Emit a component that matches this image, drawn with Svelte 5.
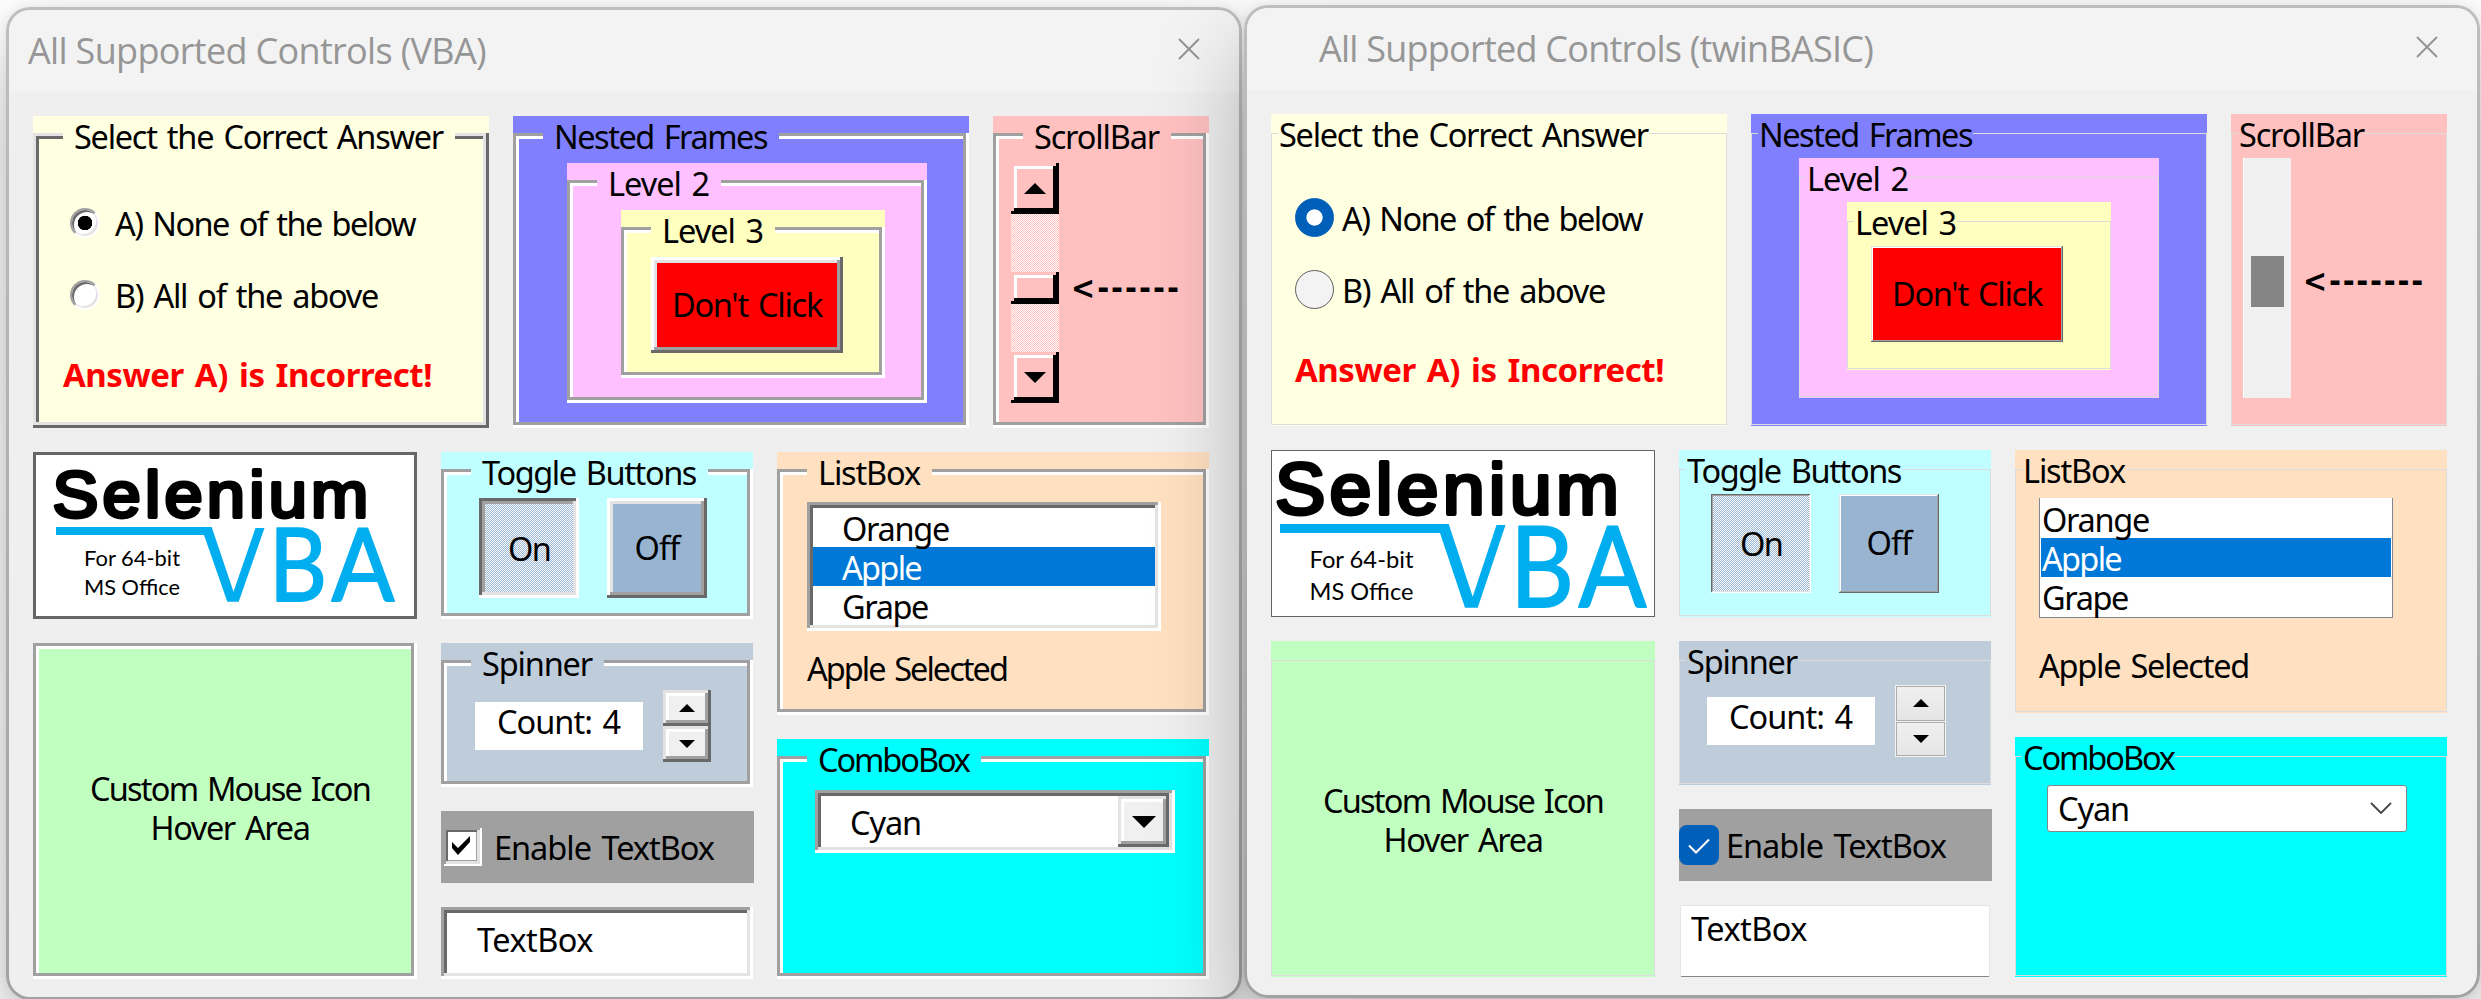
<script>
  // Spreads the letters of a label over the width it is laid out for.
  function fit(node, width) {
    const natural = node.getBoundingClientRect().width;
    const count = [...node.textContent].length;
    node.style.letterSpacing = `${(width - natural) / count}px`;
  }

  const forms = [
    {
      kind: 'vba',
      title: 'All Supported Controls (VBA)',
      titleWidth: 458,
      selectedWidth: 200,
      arrow: '<------',
      arrowWidth: 110,
      logo: {
        name: [19.500, 65, 65, 320],
        line: 'M23 75H178.700L200.500 139.700L222.500 76H231.500L205.700 149.700H194.300L171 83H23Z',
        ba: [[236, 149, 101, 58], [298.500, 149, 101, 63]],
        small: [[51, 114, 21.500, 96], [51, 143, 21.500, 96]]
      }
    },
    {
      kind: 'tb',
      title: 'All Supported Controls (twinBASIC)',
      titleWidth: 554,
      selectedWidth: 210,
      arrow: '<-------',
      arrowWidth: 122,
      logo: {
        name: [4, 63.500, 73, 348],
        line: 'M9 74H177.700L201.700 146.700L225.500 75H234.500L206.700 157.700H194L169 83H9Z',
        ba: [[239, 157, 113, 64], [307.500, 157, 113, 68]],
        small: [[38.500, 118, 23.500, 104], [38.500, 150, 23.500, 104]]
      }
    }
  ];

  const fruits = [
    ['Orange', 107],
    ['Apple', 79],
    ['Grape', 86]
  ];
  let picked = $state('Apple');
</script>

{#snippet t(text, width, cls = '')}
  <span class="t {cls}" use:fit={width}>{text}</span>
{/snippet}

{#snippet legend(text, width)}
  <div class="legend">{@render t(text, width)}</div>
{/snippet}

{#snippet tri(dir, w, h)}
  <svg class="tri" width={w} height={h} viewBox="0 0 10 10" preserveAspectRatio="none">
    <path d={dir === 'up' ? 'M5 0L10 10H0Z' : 'M0 0H10L5 10Z'} />
  </svg>
{/snippet}

<div class="desk">
  {#each forms as f}
    <section class="window {f.kind}">
      <div class="pane">
        <header>
          <h1 use:fit={f.titleWidth}>{f.title}</h1>
          <svg class="close" width="22" height="22" viewBox="0 0 22 22"><path d="M1 1L21 21M21 1L1 21" /></svg>
        </header>
        <main>
          <div class="row top">
            <div class="frame answer">
              <div class="edge">
                {@render legend('Select the Correct Answer', 369)}
                <div class="option first">
                  <i class="radio on"></i>{@render t('A) None of the below', 300)}
                </div>
                <div class="option">
                  <i class="radio"></i>{@render t('B) All of the above', 263)}
                </div>
                {@render t('Answer A) is Incorrect!', 369, 'wrong')}
              </div>
            </div>

            <div class="frame nested">
              <div class="edge">
                {@render legend('Nested Frames', 213)}
                <div class="frame level2">
                  <div class="edge">
                    {@render legend('Level 2', 101)}
                    <div class="frame level3">
                      <div class="edge">
                        {@render legend('Level 3', 101)}
                        <div class="push">{@render t("Don't Click", 150)}</div>
                      </div>
                    </div>
                  </div>
                </div>
              </div>
            </div>

            <div class="frame scrolling">
              <div class="edge">
                {@render legend('ScrollBar', 125)}
                <div class="scrollrow">
                  <div class="bar">
                    {#if f.kind === 'vba'}
                      <div class="cap">{@render tri('up', 22, 11)}</div>
                      <div class="thumb"></div>
                      <div class="cap">{@render tri('down', 22, 11)}</div>
                    {:else}
                      <div class="thumb"></div>
                    {/if}
                  </div>
                  {@render t(f.arrow, f.arrowWidth, 'pointer')}
                </div>
              </div>
            </div>
          </div>

          <div class="row">
            <div class="col c1">
              <div class="logo">
                <svg width="384" height="167" viewBox="0 0 384 167">
                  <text class="name" x={f.logo.name[0]} y={f.logo.name[1]} font-size={f.logo.name[2]} textLength={f.logo.name[3]} lengthAdjust="spacingAndGlyphs">Selenium</text>
                  <path class="blue" d={f.logo.line} />
                  {#each ['B', 'A'] as ch, i}
                    <text class="blue big" x={f.logo.ba[i][0]} y={f.logo.ba[i][1]} font-size={f.logo.ba[i][2]} textLength={f.logo.ba[i][3]} lengthAdjust="spacingAndGlyphs">{ch}</text>
                  {/each}
                  {#each ['For 64-bit', 'MS Office'] as line, i}
                    <text class="small" x={f.logo.small[i][0]} y={f.logo.small[i][1]} font-size={f.logo.small[i][2]} textLength={f.logo.small[i][3]} lengthAdjust="spacingAndGlyphs">{line}</text>
                  {/each}
                </svg>
              </div>
              <div class="frame hover">
                <div class="edge">
                  {@render t('Custom Mouse Icon', 280)}
                  {@render t('Hover Area', 159)}
                </div>
              </div>
            </div>

            <div class="col c2">
              <div class="frame toggles">
                <div class="edge">
                  {@render legend('Toggle Buttons', 214)}
                  <div class="pair">
                    <div class="toggle on">{@render t('On', 42)}</div>
                    <div class="toggle off">{@render t('Off', 45)}</div>
                  </div>
                </div>
              </div>
              <div class="frame spinner">
                <div class="edge">
                  {@render legend('Spinner', 110)}
                  <div class="spinrow">
                    <div class="count">{@render t('Count: 4', 123)}</div>
                    <div class="spin">
                      <div class="step">{@render tri('up', 16, 8)}</div>
                      <div class="step">{@render tri('down', 16, 8)}</div>
                    </div>
                  </div>
                </div>
              </div>
              <div class="enable">
                <div class="check">
                  {#if f.kind === 'vba'}
                    <svg width="18" height="19" viewBox="0 0 18 19"><path d="M0 6L6 12L18 0V6L6 19L0 12Z" /></svg>
                  {:else}
                    <svg width="22" height="16" viewBox="0 0 22 16"><path class="tick" d="M1 7.500L8 14.500L21 1.500" /></svg>
                  {/if}
                </div>
                {@render t('Enable TextBox', 220)}
              </div>
              <div class="textbox">{@render t('TextBox', 116)}</div>
            </div>

            <div class="col c3">
              <div class="frame listing">
                <div class="edge">
                  {@render legend('ListBox', 102)}
                  <div class="list">
                    {#each fruits as [name, width]}
                      <div class="item" class:picked={picked === name}>{@render t(name, width)}</div>
                    {/each}
                  </div>
                  {@render t(`${picked} Selected`, f.selectedWidth, 'result')}
                </div>
              </div>
              <div class="frame combos">
                <div class="edge">
                  {@render legend('ComboBox', 151)}
                  <div class="combo">
                    {@render t('Cyan', 71)}
                    {#if f.kind === 'vba'}
                      <div class="drop">{@render tri('down', 24, 12)}</div>
                    {:else}
                      <svg class="chev" width="22" height="12" viewBox="0 0 22 12"><path d="M1 1L11 11L21 1" /></svg>
                    {/if}
                  </div>
                </div>
              </div>
            </div>
          </div>
        </main>
      </div>
    </section>
  {/each}
</div>

<style>
  :global(body) { margin: 0; background: #fff; overflow: hidden; }
  .desk {
    display: flex; align-items: flex-start; gap: 2px; box-sizing: border-box;
    width: 2481px; height: 999px; padding: 5px 0 0 6px; overflow: hidden;
    font: 32.500px/41px "Noto Sans", sans-serif; color: #000;
  }
  .window {
    flex: none; box-sizing: border-box; width: 1236px; height: 993px; padding: 3px;
    border-radius: 24px; background: linear-gradient(#bebebe, #a2a2a2);
    box-shadow: 0 42px 90px rgba(0, 0, 0, .27), 0 0 12px rgba(0, 0, 0, .08);
  }
  .vba { margin-top: 2px; }
  .pane { height: 987px; border-radius: 21px; background: #f0f0f0; overflow: hidden; }
  .vba .pane { background: #efefef; }
  header {
    display: flex; align-items: flex-start; justify-content: space-between;
    height: 82px; box-sizing: border-box; padding: 0 39px 0 19px; background: #f3f3f3;
  }
  .tb header { padding-left: 72px; }
  h1 { margin: 0; font: 36px/82px "Open Sans", sans-serif; color: #969696; white-space: nowrap; }
  .close { margin-top: 28px; fill: none; stroke: #929292; stroke-width: 1.800; }
  main { display: flex; flex-direction: column; gap: 24px; padding: 24px; }
  .row { display: flex; gap: 24px; }
  .col { display: flex; flex-direction: column; gap: 24px; }
  .c1 { width: 384px; }
  .c2 { width: 312px; }
  .c3 { width: 432px; }
  .t { display: block; flex: none; width: max-content; white-space: nowrap; height: 39px; word-spacing: 3px; }

  .vba { --nx: 54px; --ny: 8px; --edge: 17px; }
  .tb { --nx: 48px; --ny: 5px; --edge: 19px; }

  .frame { display: flex; flex: none; box-sizing: border-box; padding-top: var(--edge); background: var(--c); }
  .tb .frame { padding-bottom: 1px; }
  .edge { flex: 1; display: flex; flex-direction: column; align-items: flex-start; min-width: 0; }
  .vba .edge {
    box-shadow: inset -3px -3px #fff, inset 3px 3px #a0a0a0, inset -6px -6px #a0a0a0, inset 6px 6px #fff;
  }
  .vba .answer > .edge {
    box-shadow: inset -3px -3px #696969, inset 3px 3px #e3e3e3, inset -6px -6px #e3e3e3, inset 6px 6px #696969;
  }
  .tb .edge { box-shadow: inset 0 0 0 1px #dcdcdc; }
  .legend { flex: none; height: 39px; margin: calc(0px - var(--edge)) 0 0 30px; padding: 0 12px 0 11px; background: var(--c); }
  .tb .legend { margin-left: 7px; padding: 0 1px; }

  .answer { --c: #ffffe1; width: 456px; height: 312px; }
  .nested { --c: #8080ff; width: 456px; height: 312px; }
  .level2 { --c: #ffc0ff; width: 360px; height: 240px; margin: var(--ny) 0 0 var(--nx); }
  .level3 { --c: #ffffc0; width: 264px; height: 168px; margin: var(--ny) 0 0 var(--nx); }
  .scrolling { --c: #ffc0c0; width: 216px; height: 312px; }
  .hover { --c: #c0ffc0; height: 336px; }
  .toggles { --c: #c0ffff; height: 167px; }
  .spinner { --c: #bfcddb; height: 144px; }
  .listing { --c: #ffe0c0; height: 263px; }
  .combos { --c: #0ff; height: 240px; }

  .option { display: flex; align-items: center; gap: 15px; height: 39px; margin: 33px 0 0 37px; }
  .option.first { margin-top: 48px; }
  .tb .option { gap: 8px; margin-left: 24px; }
  .tb .option.first { margin-top: 45px; }
  .radio {
    box-sizing: border-box; width: 30px; height: 30px; border-radius: 50%; background: #fff;
    border: 2px solid; border-color: #a0a0a0 #fff #fff #a0a0a0;
    box-shadow: inset 2px 2px #696969, inset -2px -2px #e3e3e3;
  }
  .radio.on { background: radial-gradient(circle, #000 7px, #fff 7.500px); }
  .tb .radio { width: 39px; height: 39px; border: 1.500px solid #5e5e5e; background: #f3f3f3; box-shadow: none; }
  .tb .radio.on { border-color: #005fb8; background: radial-gradient(circle, #fff 7.700px, #005fb8 8.500px); }
  .wrong { margin: 40px 0 0 30px; color: #f00; font-weight: 700; font-size: 33px; }
  .tb .wrong { margin-left: 24px; }

  .push {
    display: flex; justify-content: center; box-sizing: border-box; width: 192px; height: 96px; padding-top: 27px;
    margin: var(--ny) 0 0 30px; background: #f00;
  }
  .vba .push, .vba .off {
    box-shadow: inset -3px -3px #696969, inset 3px 3px #fff, inset -6px -6px #a0a0a0, inset 6px 6px #e3e3e3;
  }
  .tb .push { margin-left: 24px; }
  .tb .push, .tb .off {
    box-shadow: inset -1px -1px #696969, inset 1px 1px #e3e3e3, inset -2px -2px #a0a0a0, inset 2px 2px #fff;
  }

  .scrollrow { display: flex; margin: var(--ny) 0 0 18px; }
  .tb .scrollrow { margin-left: 12px; }
  .bar {
    display: flex; flex-direction: column; width: 48px; height: 240px;
    background: repeating-conic-gradient(#fff 0 25%, #ffc0c0 0 50%) 0 0 / 2px 2px;
  }
  .cap, .vba .thumb {
    display: flex; align-items: center; justify-content: center; height: 51px; background: #ffc0c0;
    box-shadow: inset -3px -3px #000, inset 3px 3px #ffc0c0, inset -6px -6px #000, inset 6px 6px #fff;
  }
  .vba .thumb { height: 32px; margin: 58px 0 48px; }
  .tb .bar { background: #f0f0f0; box-shadow: inset 1px 0 #fff; }
  .tb .thumb { width: 33px; height: 51px; margin: 98px 0 0 8px; background: #858585; }
  .pointer {
    margin: 105px 0 0 12px;
    font-family: "DejaVu Sans Condensed", "DejaVu Sans", sans-serif; font-stretch: condensed; font-weight: 700; font-size: 32px;
  }
  .tb .pointer { margin-top: 103px; }

  .logo { height: 167px; background: #fff; box-shadow: inset 0 0 0 3px #666; }
  .tb .logo { box-shadow: inset 0 0 0 1px #646464; }
  .logo svg { display: block; }
  .name { font-family: "Liberation Sans", sans-serif; letter-spacing: 4px; stroke: #000; stroke-width: 3.800; stroke-linejoin: round; }
  .blue { fill: #00aeef; }
  .big { font-family: Lato, sans-serif; stroke: #00aeef; stroke-width: 1.800; stroke-linejoin: round; }
  .small { font-family: Lato, sans-serif; }

  .hover .edge { align-items: center; padding-top: calc(139px - var(--edge)); }
  .vba .hover { padding-top: 0; }
  .vba .hover .edge { padding: 125px 0 0 10px; }

  .pair { display: flex; gap: 28px; margin: 7px 0 0 38px; }
  .tb .pair { margin: 5px 0 0 32px; }
  .toggle { display: flex; justify-content: center; box-sizing: border-box; width: 100px; height: 100px; padding-top: 30px; }
  .tb .toggle { height: 99px; padding-top: 29px; }
  .off { background: #99b4d1; padding-top: 29px; }
  .tb .off { padding-top: 28px; }
  .toggle.on { background: repeating-conic-gradient(#fff 0 25%, #99b4d1 0 50%) 0 0 / 2px 2px; }
  .vba .toggle.on { box-shadow: inset -3px -3px #fff, inset 3px 3px #696969, inset -6px -6px #e3e3e3, inset 6px 6px #a0a0a0; }
  .tb .toggle.on { box-shadow: inset -1px -1px #fff, inset 1px 1px #696969, inset -2px -2px #e3e3e3, inset 2px 2px #a0a0a0; }

  .spinrow { display: flex; gap: 20px; margin: var(--ny) 0 0 34px; }
  .tb .spinrow { margin-left: 28px; }
  .count { box-sizing: border-box; width: 168px; height: 48px; margin-top: 12px; padding-left: 22px; background: #fff; line-height: 40px; }
  .spin { display: flex; flex-direction: column; width: 48px; height: 72px; }
  .step {
    flex: 1; display: flex; align-items: center; justify-content: center; background: #f0f0f0;
    box-shadow: inset -3px -3px #696969, inset 3px 3px #e3e3e3, inset -6px -6px #a0a0a0, inset 6px 6px #fff;
  }
  .tb .spin { box-sizing: border-box; width: 51px; gap: 1px; padding: 1px; background: #f3f3f3; }
  .tb .step { background: linear-gradient(#f0f0f0, #e5e5e5); box-shadow: inset 0 0 0 1px #acacac; }

  .enable { display: flex; align-items: center; gap: 12px; width: 313px; height: 72px; background: #a0a0a0; }
  .enable .t { margin-top: -2px; }
  .tb .enable { gap: 7px; }
  .check {
    display: flex; align-items: center; justify-content: center; width: 38px; height: 38px; margin-left: 3px; background: #fff;
    box-shadow: inset -2px -2px #fff, inset 2px 2px #a0a0a0, inset -5px -5px #e3e3e3, inset 4px 4px #696969, inset -6px -6px #a0a0a0;
  }
  .check svg { margin: -4px 0 0 -4px; }
  .tb .check { width: 40px; height: 40px; margin-left: 0; border-radius: 8px; background: #005fb8; box-shadow: none; }
  .tb .check svg { margin: 2px 0 0; }
  .tick { fill: none; stroke: #fff; stroke-width: 2; }

  .textbox { box-sizing: border-box; height: 72px; padding: 12px 0 0 36px; background: #fff; }
  .vba .textbox, .vba .list, .vba .combo {
    box-shadow: inset -3px -3px #fff, inset 3px 3px #a0a0a0, inset -6px -6px #e3e3e3, inset 6px 6px #696969;
  }
  .tb .textbox { margin: 0 1px; padding: 2px 0 0 10px; border: 1px solid #e5e5e5; border-bottom-color: #868686; border-radius: 2px; }

  .list { box-sizing: border-box; width: 354px; height: 129px; margin: 11px 0 0 30px; padding: 6px; background: #fff; }
  .item { height: 39px; padding-left: 29px; }
  .picked { background: #0078d7; color: #fff; }
  .tb .list { height: 120px; margin: 9px 0 0 24px; padding: 1px 1px 0; border: 1px solid #828790; border-top: 0; }
  .tb .item { padding-left: 1px; }
  .result { margin: 17px 0 0 30px; }
  .tb .result { margin: 27px 0 0 24px; }

  .combo {
    display: flex; align-items: center; justify-content: space-between; box-sizing: border-box;
    width: 360px; height: 63px; margin: 12px 0 0 38px; padding: 0 6px 0 35px; background: #fff;
  }
  .drop {
    display: flex; align-items: center; justify-content: center; width: 51px; height: 51px; background: #f0f0f0;
    box-shadow: inset -3px -3px #696969, inset 3px 3px #e3e3e3, inset -6px -6px #a0a0a0, inset 6px 6px #fff;
  }
  .tb .combo { height: 47px; margin: 9px 0 0 32px; padding: 0 14px 2px 10px; border: 1px solid #868686; border-radius: 3px; }
  .chev { fill: none; stroke: #444; stroke-width: 1.800; }
</style>
